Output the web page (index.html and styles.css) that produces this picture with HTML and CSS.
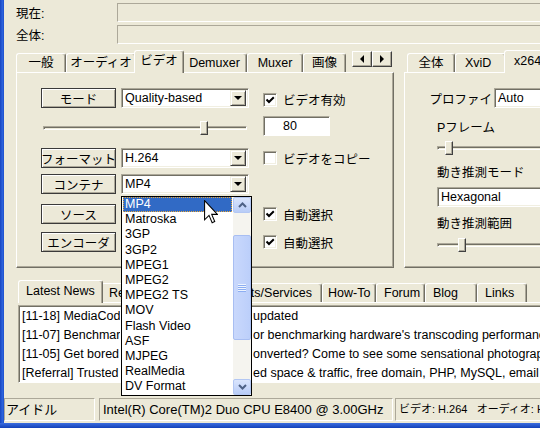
FILE: index.html
```html
<!DOCTYPE html>
<html lang="ja">
<head>
<meta charset="utf-8">
<title>MediaCoder</title>
<link rel="stylesheet" href="styles.css">
</head>
<body>
<div class="window">
  <div class="window-body">
    <div class="frame-left"></div>
    <div class="client">
      <div class="prog-row prog-current">
        <span class="prog-label">現在:</span>
        <div class="prog-box"></div>
      </div>
      <div class="prog-row prog-total">
        <span class="prog-label">全体:</span>
        <div class="prog-box"></div>
      </div>

      <div class="groups">
        <div class="tabgroup video-group">
          <div class="tabstrip">
            <div class="tab t-general">一般</div>
            <div class="tab t-audio">オーディオ</div>
            <div class="tab active t-video">ビデオ</div>
            <div class="tab t-demuxer">Demuxer</div>
            <div class="tab t-muxer">Muxer</div>
            <div class="tab t-image">画像</div>
            <div class="tab-scroll">
              <span class="scroll-btn"><span class="tri tri-left"></span></span>
              <span class="scroll-btn"><span class="tri tri-right"></span></span>
            </div>
          </div>
          <div class="panel video-panel">
            <div class="row row-mode">
              <div class="btn">モード</div>
              <div class="select"><span class="select-value">Quality-based</span><span class="select-arrow"></span></div>
              <div class="check"><span class="box"><svg viewBox="0 0 10 10" width="10" height="10"><path d="M1.5 4.5 L4 7 L8.8 2.2" fill="none" stroke="#000" stroke-width="2"/></svg></span><span>ビデオ有効</span></div>
            </div>
            <div class="row row-quality">
              <div class="slider slider-quality"><div class="slider-track"></div><div class="slider-thumb" style="left:157px"></div></div>
              <div class="textbox">80</div>
            </div>
            <div class="row row-format">
              <div class="btn">フォーマット</div>
              <div class="select"><span class="select-value">H.264</span><span class="select-arrow"></span></div>
              <div class="check"><span class="box"></span><span>ビデオをコピー</span></div>
            </div>
            <div class="row row-container">
              <div class="btn">コンテナ</div>
              <div class="select"><span class="select-value">MP4</span><span class="select-arrow"></span></div>
            </div>
            <div class="row row-source">
              <div class="btn">ソース</div>
              <div class="select"><span class="select-value"></span><span class="select-arrow"></span></div>
              <div class="check"><span class="box"><svg viewBox="0 0 10 10" width="10" height="10"><path d="M1.5 4.5 L4 7 L8.8 2.2" fill="none" stroke="#000" stroke-width="2"/></svg></span><span>自動選択</span></div>
            </div>
            <div class="row row-encoder">
              <div class="btn">エンコーダ</div>
              <div class="select"><span class="select-value"></span><span class="select-arrow"></span></div>
              <div class="check"><span class="box"><svg viewBox="0 0 10 10" width="10" height="10"><path d="M1.5 4.5 L4 7 L8.8 2.2" fill="none" stroke="#000" stroke-width="2"/></svg></span><span>自動選択</span></div>
            </div>
          </div>
        </div>

        <div class="tabgroup codec-group">
          <div class="tabstrip">
            <div class="tab t-all">全体</div>
            <div class="tab t-xvid">XviD</div>
            <div class="tab active t-x264">x264</div>
          </div>
          <div class="panel codec-panel">
            <div class="profile-row">
              <span class="profile-label">プロファイ</span>
              <div class="select select-long"><span class="select-value">Auto</span></div>
            </div>
            <div class="field-label label-pframe">Pフレーム</div>
            <div class="slider slider-long slider-pframe"><div class="slider-track"></div><div class="slider-thumb" style="left:8px"></div></div>
            <div class="field-label label-me">動き推測モード</div>
            <div class="select select-long select-me"><span class="select-value">Hexagonal</span></div>
            <div class="field-label label-range">動き推測範囲</div>
            <div class="slider slider-long slider-range"><div class="slider-track"></div><div class="slider-thumb" style="left:21px"></div></div>
          </div>
        </div>
      </div>

      <div class="news-group">
        <div class="tabstrip news-tabs">
          <div class="tab active n-latest">Latest News</div>
          <div class="tab n-recommended">Recommended</div>
          <div class="tab n-products">Products/Services</div>
          <div class="tab n-howto">How-To</div>
          <div class="tab n-forum">Forum</div>
          <div class="tab n-blog">Blog</div>
          <div class="tab n-links">Links</div>
        </div>
        <div class="news-panel">
          <div class="news-box">
            <div class="news-line"><span class="news-lead">[11-18] MediaCoder</span>updated</div>
            <div class="news-line"><span class="news-lead">[11-07] Benchmarking</span>or benchmarking hardware's transcoding performance</div>
            <div class="news-line"><span class="news-lead">[11-05] Get bored of</span>onverted? Come to see some sensational photographs</div>
            <div class="news-line"><span class="news-lead">[Referral] Trusted web</span>ed space &amp; traffic, free domain, PHP, MySQL, email hosting</div>
          </div>
        </div>
      </div>

      <div class="statusbar">
        <div class="status-cell s-state">アイドル</div>
        <div class="status-cell s-cpu">Intel(R) Core(TM)2 Duo CPU E8400 @ 3.00GHz</div>
        <div class="status-cell s-codec">ビデオ: H.264&nbsp;&nbsp;&nbsp;オーディオ: HE-AAC</div>
      </div>
    </div>
  </div>
  <div class="frame-bottom"></div>

  <div class="dropdown">
    <ul class="dropdown-items">
      <li class="selected">MP4</li>
      <li>Matroska</li>
      <li>3GP</li>
      <li>3GP2</li>
      <li>MPEG1</li>
      <li>MPEG2</li>
      <li>MPEG2 TS</li>
      <li>MOV</li>
      <li>Flash Video</li>
      <li>ASF</li>
      <li>MJPEG</li>
      <li>RealMedia</li>
      <li>DV Format</li>
    </ul>
    <div class="vscroll">
      <div class="vs-btn"><svg width="9" height="6" viewBox="0 0 9 6"><path d="M1 5 L4.5 1.5 L8 5" fill="none" stroke="#4D6185" stroke-width="2"/></svg></div>
      <div class="vs-thumb"><span class="grip"></span></div>
      <div class="vs-btn vs-down"><svg width="9" height="6" viewBox="0 0 9 6"><path d="M1 1 L4.5 4.5 L8 1" fill="none" stroke="#4D6185" stroke-width="2"/></svg></div>
    </div>
  </div>

  <svg class="cursor" width="14" height="24" viewBox="0 0 12 20" preserveAspectRatio="none"><path d="M0.5 0.5 V16.5 L4.3 12.8 L7 19 L9.2 18 L6.6 12 H11.5 Z" fill="#fff" stroke="#000" stroke-width="0.9" stroke-linejoin="miter"/></svg>
</div>
</body>
</html>
```

FILE: styles.css
```css
* { box-sizing: border-box; }

html, body {
  margin: 0;
  padding: 0;
}

body {
  width: 540px;
  height: 428px;
  overflow: hidden;
  background: #ECE9D8;
  font-family: "Liberation Sans", "Noto Sans CJK JP", sans-serif;
  font-size: 12.5px;
  color: #000;
}

.window {
  position: relative;
  height: 428px;
  display: flex;
  flex-direction: column;
}

.window-body {
  flex: 1;
  display: flex;
  min-height: 0;
}

.frame-left {
  width: 4px;
  flex: none;
  background: linear-gradient(90deg, #1845C0, #2C63DC 60%, #1D4FCB);
}

.frame-bottom {
  height: 5px;
  flex: none;
  background: linear-gradient(#3A6CDF, #1240B8);
}

.client {
  flex: 1;
  min-width: 0;
  overflow: hidden;
  display: flex;
  flex-direction: column;
}

/* progress rows */
.prog-row {
  display: flex;
  align-items: center;
  height: 19px;
  margin-top: 3px;
  flex: none;
}

.prog-label {
  width: 113px;
  padding-left: 12px;
  flex: none;
}

.prog-box {
  width: 440px;
  height: 19px;
  flex: none;
  border: 1px solid;
  border-color: #ACA899 #FFFFFF #FFFFFF #ACA899;
}

/* tab groups */
.groups {
  display: flex;
  margin-top: 6px;
  height: 218px;
  flex: none;
}

.tabgroup {
  display: flex;
  flex-direction: column;
}

.video-group {
  margin-left: 12px;
  width: 378px;
  flex: none;
}

.codec-group {
  margin-left: 10px;
  width: 160px;
  flex: none;
}

.tabstrip {
  display: flex;
  align-items: flex-end;
  height: 22px;
  flex: none;
  position: relative;
  z-index: 1;
}

.tab {
  flex: none;
  height: 19px;
  line-height: 18px;
  background: #ECE9D8;
  border: 1px solid #FFFFFF;
  border-bottom: none;
  border-right-color: #716F64;
  box-shadow: inset -1px 0 #ACA899;
  border-radius: 3px 3px 0 0;
  text-align: center;
  white-space: nowrap;
  overflow: hidden;
}

.tab.active {
  height: 23px;
  line-height: 20px;
  margin: 0 -2px -1px;
  position: relative;
  z-index: 2;
}

.t-general { width: 50px; }
.t-audio { width: 70px; }
.t-video { width: 50px; }
.t-demuxer { width: 65px; }
.t-muxer { width: 56px; }
.t-image { width: 43px; }

.t-all { width: 48px; margin-left: 3px; }
.t-xvid { width: 51px; text-align: left; padding-left: 9px; }
.t-x264 { width: 60px; text-align: left; padding-left: 9px; }

.tab-scroll {
  display: flex;
  align-self: flex-start;
  margin-top: 1px;
  margin-left: 6px;
}

.scroll-btn {
  width: 20px;
  height: 16px;
  display: flex;
  align-items: center;
  justify-content: center;
  background: #ECE9D8;
  border: 1px solid;
  border-color: #FFFFFF #404040 #404040 #FFFFFF;
  box-shadow: inset -1px -1px #ACA899;
}

.tri {
  width: 0;
  height: 0;
  border-top: 4px solid transparent;
  border-bottom: 4px solid transparent;
}

.tri-left { border-right: 4px solid #000; }
.tri-right { border-left: 4px solid #000; }

.panel {
  flex: 1;
  border: 1px solid;
  border-color: #FFFFFF #716F64 #716F64 #FFFFFF;
  box-shadow: inset -1px -1px #ACA899;
}

/* video panel */
.video-panel {
  padding: 14px 0 0 24px;
  display: flex;
  flex-direction: column;
}

.row {
  display: grid;
  grid-template-columns: 80px 142px 1fr;
  align-items: center;
  height: 20px;
  flex: none;
}

.row-quality { margin-top: 9px; }
.row-format { margin-top: 12px; }
.row-container { margin-top: 6px; }
.row-source { margin-top: 10px; }
.row-encoder { margin-top: 8px; }

.btn {
  width: 75px;
  height: 20px;
  display: flex;
  align-items: center;
  justify-content: center;
  background: #ECE9D8;
  border: 1px solid #3A3A3A;
  box-shadow: inset 1px 1px #FFFFFF, inset -1px -1px #ACA899;
  white-space: nowrap;
}

.select {
  width: 128px;
  height: 20px;
  display: flex;
  align-items: center;
  padding: 2px;
  background: #FFFFFF;
  border: 1px solid;
  border-color: #ACA899 #FFFFFF #FFFFFF #ACA899;
  box-shadow: inset 1px 1px #716F64, inset -1px -1px #F1EFE2;
}

.select-value {
  flex: 1;
  min-width: 0;
  padding-left: 1px;
  line-height: 16px;
  white-space: nowrap;
  overflow: hidden;
}

.select-arrow {
  width: 16px;
  height: 16px;
  flex: none;
  display: flex;
  align-items: center;
  justify-content: center;
  background: #ECE9D8;
  border: 1px solid;
  border-color: #F1EFE2 #404040 #404040 #F1EFE2;
  box-shadow: inset 1px 1px #FFFFFF, inset -1px -1px #ACA899;
}

.select-arrow::after {
  content: "";
  width: 0;
  height: 0;
  border-left: 4px solid transparent;
  border-right: 4px solid transparent;
  border-top: 4px solid #000;
}

.check {
  display: flex;
  align-items: center;
  gap: 6px;
  white-space: nowrap;
}

.row-mode .check { margin-top: 3px; }

.box {
  width: 14px;
  height: 14px;
  flex: none;
  display: flex;
  align-items: center;
  justify-content: center;
  background: #FFFFFF;
  border: 1px solid;
  border-color: #ACA899 #FFFFFF #FFFFFF #ACA899;
  box-shadow: inset 1px 1px #716F64, inset -1px -1px #F1EFE2;
}

.textbox {
  width: 67px;
  height: 20px;
  line-height: 18px;
  padding-left: 19px;
  background: #FFFFFF;
  border: 1px solid;
  border-color: #ACA899 #FFFFFF #FFFFFF #ACA899;
  box-shadow: inset 1px 1px #716F64;
}

/* sliders */
.slider {
  position: relative;
  height: 16px;
}

.slider-quality {
  grid-column: 1 / 3;
  align-self: start;
  margin: 4px 0 0 2px;
  width: 204px;
}

.slider-track {
  position: absolute;
  left: 0;
  right: 0;
  top: 6px;
  height: 4px;
  border: 1px solid;
  border-color: #ACA899 #FFFFFF #FFFFFF #ACA899;
  box-shadow: inset 1px 0 #716F64, inset 0 1px #716F64;
}

.slider-thumb {
  position: absolute;
  top: 1px;
  width: 8px;
  height: 14px;
  background: #ECE9D8;
  border: 1px solid;
  border-color: #FFFFFF #404040 #404040 #FFFFFF;
  box-shadow: inset -1px -1px #ACA899;
}

/* codec panel */
.codec-panel {
  padding: 15px 0 0 32px;
  display: flex;
  flex-direction: column;
}

.profile-row {
  display: flex;
  align-items: center;
  height: 20px;
  flex: none;
}

.profile-label {
  width: 55px;
  display: flex;
  justify-content: flex-end;
  white-space: nowrap;
  margin-right: 2px;
  flex: none;
}

.select-long {
  width: 130px;
  flex: none;
}

.field-label {
  height: 16px;
  line-height: 16px;
  white-space: nowrap;
  flex: none;
}

.label-pframe { margin-top: 12px; }
.slider-long { width: 130px; flex: none; }
.slider-pframe { margin-top: 4px; }
.label-me { margin-top: 9px; }
.select-me { margin-top: 6px; }
.label-range { margin-top: 9px; }
.slider-range { margin-top: 5px; }

/* news */
.news-group {
  margin: 12px 0 0 14px;
  flex: none;
}

.news-tabs {
  padding-left: 2px;
}

.news-tabs .tab {
  text-align: left;
  padding-left: 7px;
}

.n-latest { width: 85px; }
.n-recommended { width: 89px; }
.news-tabs .n-products { width: 132px; text-align: right; padding-right: 9px; }
.n-howto { width: 54px; }
.news-tabs .n-howto { padding-left: 5px; }
.n-forum { width: 49px; }
.n-blog { width: 52px; }
.n-links { width: 50px; }

.news-panel {
  border-top: 1px solid #FFFFFF;
  padding-top: 2px;
}

.news-box {
  width: 540px;
  height: 78px;
  padding: 1px 0 0 3px;
  background: #FFFFFF;
  border: 1px solid;
  border-color: #ACA899 #FFFFFF #FFFFFF #ACA899;
  box-shadow: inset 1px 1px #716F64;
  line-height: 19px;
  white-space: nowrap;
  overflow: hidden;
}

.news-lead {
  display: inline-block;
  width: 98px;
  margin-right: 133px;
  overflow: hidden;
  vertical-align: top;
}

/* status bar */
.statusbar {
  display: flex;
  height: 23px;
  margin-top: 15px;
  flex: none;
  font-size: 13px;
}

.status-cell {
  height: 23px;
  line-height: 21px;
  border: 1px solid;
  border-color: #ACA899 #FFFFFF #FFFFFF #ACA899;
  white-space: nowrap;
  overflow: hidden;
  flex: none;
}

.s-state { width: 91px; padding-left: 1px; }
.s-cpu { width: 294px; margin-left: 4px; padding-left: 3px; }
.s-codec { width: 160px; margin-left: 2px; padding-left: 3px; font-size: 11px; }

/* dropdown overlay */
.dropdown {
  position: absolute;
  left: 121px;
  top: 196px;
  width: 131px;
  height: 200px;
  display: flex;
  background: #FFFFFF;
  border: 1px solid #000;
  z-index: 10;
}

.dropdown-items {
  list-style: none;
  margin: 0;
  padding: 0;
  flex: 1;
  min-width: 0;
}

.dropdown-items li {
  height: 15.2px;
  line-height: 15.2px;
  padding-left: 3px;
  white-space: nowrap;
}

.dropdown-items li.selected {
  background: #316AC5;
  color: #FFFFFF;
  outline: 1px dotted #E9A93A;
  outline-offset: -1px;
  margin: 0 1px;
  padding-left: 2px;
}

.vscroll {
  width: 18px;
  flex: none;
  display: flex;
  flex-direction: column;
  background: #F5F4EF;
}

.vs-btn {
  height: 16px;
  flex: none;
  display: flex;
  align-items: center;
  justify-content: center;
  background: linear-gradient(#DAE5FD, #B8CCF7);
  border: 1px solid #B3C7F3;
  border-radius: 2px;
}

.vs-thumb {
  margin-top: 22px;
  height: 105px;
  flex: none;
  display: flex;
  align-items: center;
  justify-content: center;
  background: linear-gradient(90deg, #C9D8FC, #BCCFFA);
  border: 1px solid #A8BEF2;
  border-radius: 2px;
}

.grip {
  width: 8px;
  height: 8px;
  background: repeating-linear-gradient(#EEF4FE 0 1px, #8DAEF2 1px 2px);
}

.vs-down {
  margin-top: auto;
}

.cursor {
  position: absolute;
  left: 204px;
  top: 200px;
  z-index: 20;
}
```
